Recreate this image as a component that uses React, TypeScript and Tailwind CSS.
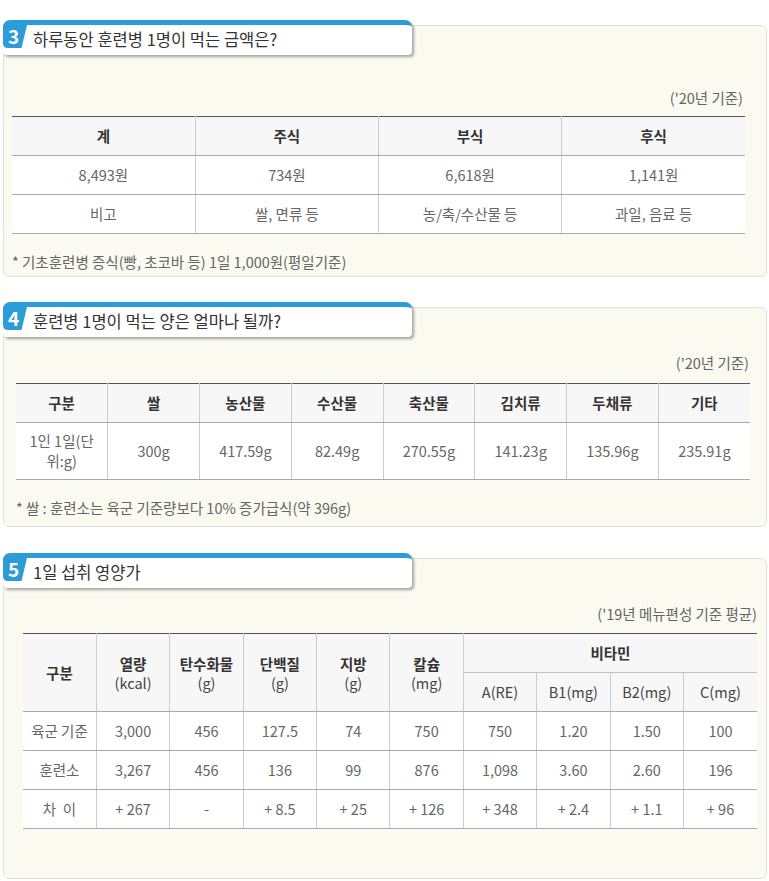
import React from "react";

const FONT = "font-['Noto_Sans_CJK_KR','Noto_Sans',sans-serif]";

function Tab({ num, title }: { num: string; title: string }) {
  return (
    <div className="relative z-10 flex h-[35px] w-[409px] items-center rounded-t-[7px] rounded-b-[4px] border-t-[5px] border-[#2b9cd7] bg-white pb-[3px] shadow-[2px_2px_3px_rgba(0,0,0,0.35)]">
      <svg className="absolute left-0 top-0" width="24" height="23" viewBox="0 0 24 23">
        <path d="M0 0 H24 L18.5 23 H5 Q0 23 0 18 Z" fill="#2b9cd7" />
      </svg>
      <span className="absolute left-[5px] top-[-1px] text-[19px] font-bold leading-[23px] text-white">{num}</span>
      <span className="pl-[30px] text-[16.5px] leading-[20px] text-[#333]">{title}</span>
    </div>
  );
}

const th = "border-b border-l border-b-[#a9a9a9] border-l-[#cccccc] bg-[#f7f7f7] font-bold text-[#333] first:border-l-0";
const td = "border-b border-l border-b-[#a9a9a9] border-l-[#cccccc] bg-white text-[#666] first:border-l-0";

export default function App() {
  return (
    <div className={`${FONT} min-h-[881px] bg-white pl-[3px] pr-[2px] pt-[20px] text-[14.5px]`}>
      {/* Section 3 */}
      <section>
        <Tab num="3" title="하루동안 훈련병 1명이 먹는 금액은?" />
        <div className="-mt-[30px] rounded-[6px] border border-[#e2e2d4] bg-[#fafaf0] pb-[4px] pt-[62px]">
          <div className="mb-[8px] mr-[23px] text-right leading-[20px] text-[#666]">('20년 기준)</div>
          <table className="ml-[8px] w-[733px] table-fixed border-collapse border-t border-t-[#555] text-center">
            <tbody>
              <tr className="h-[39px]">
                <th className={th}>계</th>
                <th className={th}>주식</th>
                <th className={th}>부식</th>
                <th className={th}>후식</th>
              </tr>
              <tr className="h-[39px]">
                <td className={td}>8,493원</td>
                <td className={td}>734원</td>
                <td className={td}>6,618원</td>
                <td className={td}>1,141원</td>
              </tr>
              <tr className="h-[39px]">
                <td className={td}>비고</td>
                <td className={td}>쌀, 면류 등</td>
                <td className={td}>농/축/수산물 등</td>
                <td className={td}>과일, 음료 등</td>
              </tr>
            </tbody>
          </table>
          <div className="ml-[8px] mt-[18px] leading-[20px] text-[#666]">* 기초훈련병 증식(빵, 초코바 등) 1일 1,000원(평일기준)</div>
        </div>
      </section>

      {/* Section 4 */}
      <section className="mt-[25px]">
        <Tab num="4" title="훈련병 1명이 먹는 양은 얼마나 될까?" />
        <div className="-mt-[30px] rounded-[6px] border border-[#e2e2d4] bg-[#fafaf0] pb-[8px] pt-[45px]">
          <div className="mb-[10px] mr-[17px] text-right leading-[20px] text-[#666]">('20년 기준)</div>
          <table className="ml-[12px] w-[734px] table-fixed border-collapse border-t border-t-[#555] text-center">
            <tbody>
              <tr className="h-[39px]">
                {["구분", "쌀", "농산물", "수산물", "축산물", "김치류", "두채류", "기타"].map((h) => (
                  <th key={h} className={th}>{h}</th>
                ))}
              </tr>
              <tr className="h-[57px]">
                <td className={`${td} leading-[20px]`}>
                  1인 1일(단
                  <br />
                  위:g)
                </td>
                {["300g", "417.59g", "82.49g", "270.55g", "141.23g", "135.96g", "235.91g"].map((v) => (
                  <td key={v} className={td}>{v}</td>
                ))}
              </tr>
            </tbody>
          </table>
          <div className="ml-[12px] mt-[18px] leading-[20px] text-[#666]">* 쌀 : 훈련소는 육군 기준량보다 10% 증가급식(약 396g)</div>
        </div>
      </section>

      {/* Section 5 */}
      <section className="mt-[26px]">
        <Tab num="5" title="1일 섭취 영양가" />
        <div className="-mt-[30px] rounded-[6px] border border-[#e2e2d4] bg-[#fafaf0] pb-[49px] pt-[45px]">
          <div className="mb-[9px] mr-[9px] text-right leading-[20px] text-[#666]">('19년 메뉴편성 기준 평균)</div>
          <table className="ml-[19px] w-[734px] table-fixed border-collapse border-t border-t-[#555] text-center">
            <tbody>
              <tr className="h-[39px]">
                <th rowSpan={2} className={th}>구분</th>
                {[
                  ["열량", "(kcal)"],
                  ["탄수화물", "(g)"],
                  ["단백질", "(g)"],
                  ["지방", "(g)"],
                  ["칼슘", "(mg)"],
                ].map(([a, b]) => (
                  <th key={a} rowSpan={2} className={`${th} leading-[19px]`}>
                    {a}
                    <br />
                    <span className="font-normal text-[#444]">{b}</span>
                  </th>
                ))}
                <th colSpan={4} className={`${th} border-b-[#c4c4c4]`}>비타민</th>
              </tr>
              <tr className="h-[39px]">
                {["A(RE)", "B1(mg)", "B2(mg)", "C(mg)"].map((h) => (
                  <th key={h} className={`${th} !border-l border-l-[#cccccc] font-normal text-[#444]`}>{h}</th>
                ))}
              </tr>
              {[
                ["육군 기준", "3,000", "456", "127.5", "74", "750", "750", "1.20", "1.50", "100"],
                ["훈련소", "3,267", "456", "136", "99", "876", "1,098", "3.60", "2.60", "196"],
                ["차  이", "+ 267", "-", "+ 8.5", "+ 25", "+ 126", "+ 348", "+ 2.4", "+ 1.1", "+ 96"],
              ].map((row, i) => (
                <tr key={i} className="h-[39px]">
                  {row.map((c, j) => (
                    <td key={j} className={`${td} whitespace-pre`}>{c}</td>
                  ))}
                </tr>
              ))}
            </tbody>
          </table>
        </div>
      </section>
    </div>
  );
}
